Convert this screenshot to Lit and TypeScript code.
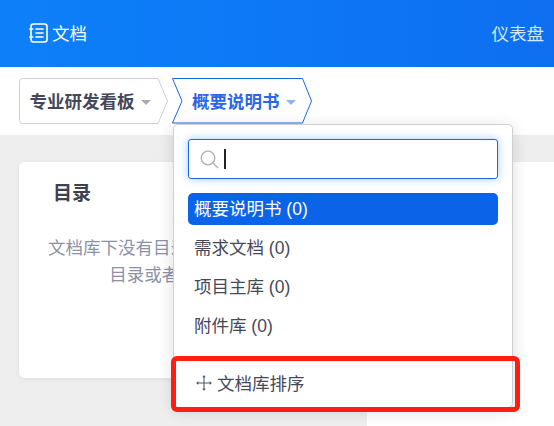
import { LitElement, html, css } from "lit";
import { customElement } from "lit/decorators.js";

@customElement("app-root")
export class AppRoot extends LitElement {
  static styles = css`
    :host {
      display: block;
      position: relative;
      width: 554px;
      height: 426px;
      overflow: hidden;
      font-family: "Liberation Sans", "Noto Sans CJK SC", sans-serif;
      font-size: 17.5px;
      background: #eeeeee;
      color: #45485a;
    }
    .top {
      height: 67px;
      display: flex;
      align-items: center;
      justify-content: space-between;
      padding: 0 10px 2px 29px;
      box-sizing: border-box;
      background: linear-gradient(90deg, #0d80f9, #0d6ff0);
      color: #fff;
    }
    .brand { display: flex; align-items: center; gap: 4px; }
    .brand svg { display: block; margin-top: 1px; }
    .dash { color: #d5e7fd; }
    .crumbs {
      height: 68px;
      box-sizing: border-box;
      padding: 11px 0 0 19px;
      display: flex;
      gap: 4px;
      background: #fff;
    }
    .crumb {
      position: relative;
      height: 46px;
      display: flex;
      align-items: center;
      font-weight: 700;
      box-sizing: border-box;
      padding-bottom: 1px;
    }
    .crumb > svg.shape { position: absolute; left: 0; top: 0; }
    .crumb span { position: relative; }
    .c1 { width: 149px; padding-left: 10.5px; color: #45485a; }
    .c2 { width: 140px; padding-left: 20px; color: #2a66e8; }
    .caret {
      position: relative;
      width: 0;
      height: 0;
      margin: 3px 0 0 6px;
      border-left: 5px solid transparent;
      border-right: 5px solid transparent;
      border-top: 5px solid #a9abb5;
    }
    .c2 .caret { border-top-color: #8fb2f2; }
    .main {
      display: flex;
      gap: 10px;
      padding: 27px 0 0 19px;
      height: 291px;
      box-sizing: border-box;
    }
    .card {
      width: 338px;
      height: 216px;
      flex: none;
      background: #fff;
      border-radius: 5px;
      box-shadow: 0 1px 4px rgba(0, 0, 0, 0.08);
      box-sizing: border-box;
      padding: 17px 0 0;
    }
    .card h2 {
      margin: 0 0 0 34px;
      font-size: 19px;
      line-height: 30px;
      font-weight: 700;
      color: #3e4150;
    }
    .card p {
      margin: 26px 0 0;
      line-height: 27px;
      text-align: center;
      color: #8d91a6;
    }
    .side { flex: 1; background: #fff; }
    .menu {
      position: absolute;
      left: 173px;
      top: 124px;
      width: 340px;
      height: 284px;
      box-sizing: border-box;
      padding: 14px 14px 0;
      background: #fff;
      border: 1px solid #cfcfcf;
      border-radius: 5px;
      box-shadow: 0 3px 16px rgba(0, 0, 0, 0.14);
    }
    .search {
      height: 40px;
      box-sizing: border-box;
      border: 1px solid #1668e8;
      border-radius: 3px;
      display: flex;
      align-items: center;
      gap: 6px;
      padding-left: 11px;
      box-shadow: 0 0 8px rgba(40, 120, 245, 0.4);
    }
    .search svg { display: block; }
    .cursor { width: 2px; height: 20px; background: #222; margin-left: -1px; }
    .list { margin: 14px 0 0; padding: 0; list-style: none; display: flex; flex-direction: column; gap: 7px; }
    .list li {
      height: 32px;
      line-height: 33px;
      padding-left: 6px;
      border-radius: 5px;
      color: #45485a;
    }
    .list li.on { background: #0b64e8; color: #fff; }
    .sort {
      margin-top: 25px;
      height: 30px;
      display: flex;
      align-items: center;
      gap: 5px;
      padding-left: 8px;
      color: #45485a;
    }
    .sort svg { display: block; margin-top: 1px; }
    .mark {
      position: absolute;
      left: 171px;
      top: 356px;
      width: 349px;
      height: 56px;
      box-sizing: border-box;
      border: 5px solid #ff1f12;
      border-radius: 6px;
    }
  `;

  render() {
    return html`
      <div class="top">
        <div class="brand">
          <svg width="19" height="20" viewBox="0 0 19 20" fill="none" stroke="#fff" stroke-width="1.6" stroke-linecap="round">
            <rect x="2" y="1" width="16" height="18" rx="2.5"></rect>
            <path d="M7 6h7M7 10h7M7 14h7"></path>
            <path d="M0.8 6h3M0.8 14h3"></path>
          </svg>
          <span>文档</span>
        </div>
        <div class="dash">仪表盘</div>
      </div>
      <div class="crumbs">
        <div class="crumb c1">
          <svg class="shape" width="149" height="46" viewBox="0 0 149 46" fill="#fff" stroke="#cbced7">
            <path d="M3.5 .5H139l9.5 22.5L139 45.5H3.5a3 3 0 0 1-3-3V3.500a3 3 0 0 1 3-3z"></path>
          </svg>
          <span>专业研发看板</span><i class="caret"></i>
        </div>
        <div class="crumb c2">
          <svg class="shape" width="140" height="46" viewBox="0 0 140 46" fill="#fff" stroke="#1668e8">
            <path d="M.5 .5H130.500l9 22.500-9 22H.5l9.500-22z"></path>
          </svg>
          <span>概要说明书</span><i class="caret"></i>
        </div>
      </div>
      <div class="main">
        <section class="card">
          <h2>目录</h2>
          <p>文档库下没有目录，请您先新建一个<br />目录或者导入文档。</p>
        </section>
        <div class="side"></div>
      </div>
      <div class="menu">
        <div class="search">
          <svg width="19" height="19" viewBox="0 0 19 19" fill="none" stroke="#aeaeae" stroke-width="1.3">
            <circle cx="8" cy="8" r="6.800"></circle>
            <path d="M13 13l5 5"></path>
          </svg>
          <i class="cursor"></i>
        </div>
        <ul class="list">
          <li class="on">概要说明书 (0)</li>
          <li>需求文档 (0)</li>
          <li>项目主库 (0)</li>
          <li>附件库 (0)</li>
        </ul>
        <div class="sort">
          <svg width="16" height="16" viewBox="0 0 16 16" fill="none" stroke="#555a6c" stroke-width="1.100">
            <path d="M1 8h14M8 1v14"></path>
            <path d="M2.500 6.800L1 8l1.500 1.200M13.500 6.800L15 8l-1.500 1.200M6.800 2.500L8 1l1.200 1.500M6.800 13.500L8 15l1.200-1.500"></path>
          </svg>
          <span>文档库排序</span>
        </div>
      </div>
      <div class="mark"></div>
    `;
  }
}
